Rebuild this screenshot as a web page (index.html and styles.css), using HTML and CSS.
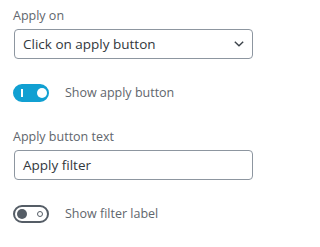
FILE: index.html
```html
<!DOCTYPE html>
<html>
<head>
<meta charset="utf-8">
<link rel="stylesheet" href="styles.css">
</head>
<body>
<div class="panel">
  <div class="field">
    <label class="label">Apply on</label>
    <div class="select">
      <span class="select-text">Click on apply button</span>
      <svg class="chevron" width="12" height="8" viewBox="0 0 12 8"><path d="M1.8 1.8 L6 5.8 L10.2 1.8" fill="none" stroke="#3c434a" stroke-width="1.4"/></svg>
    </div>
  </div>
  <div class="toggle-row">
    <span class="toggle on">
      <span class="on-icon"></span>
      <span class="thumb"></span>
    </span>
    <span class="toggle-label">Show apply button</span>
  </div>
  <div class="field">
    <label class="label">Apply button text</label>
    <div class="input">Apply filter</div>
  </div>
  <div class="toggle-row">
    <span class="toggle off">
      <span class="thumb"></span>
      <span class="off-icon"></span>
    </span>
    <span class="toggle-label">Show filter label</span>
  </div>
</div>
</body>
</html>
```
FILE: styles.css
```css
* { box-sizing: border-box; }
body {
  margin: 0;
  background: #fff;
  font-family: "Open Sans", "Noto Sans", sans-serif;
  color: #50575e;
}
.panel {
  display: flex;
  flex-direction: column;
  padding: 7px 14px 0 14px;
}
.field {
  display: flex;
  flex-direction: column;
}
.label {
  font-size: 12.5px;
  line-height: 18px;
  color: #5f666d;
  margin-left: -1px;
  margin-bottom: 4px;
}
.select, .input {
  width: 239px;
  height: 30px;
  border: 1px solid #8d96a0;
  border-radius: 4px;
  display: flex;
  align-items: center;
  padding: 0 8px;
  font-size: 13.5px;
  color: #32373c;
}
.select { justify-content: space-between; padding-right: 7px; }
.chevron { display: block; }
.toggle-row {
  display: flex;
  align-items: center;
  margin: 25px 0 26px -1px;
  height: 18px;
}
.toggle {
  position: relative;
  width: 36px;
  height: 18px;
  border-radius: 9px;
  border: 2px solid #555d66;
  flex: none;
}
.toggle.on { background: #11a0d2; border-color: #11a0d2; }
.thumb {
  position: absolute;
  top: 2px;
  left: 2px;
  width: 10px;
  height: 10px;
  border-radius: 50%;
  background: #555d66;
}
.toggle.on .thumb { left: 22px; background: #fff; }
.on-icon {
  position: absolute;
  left: 6px;
  top: 3px;
  width: 2px;
  height: 8px;
  background: #fff;
}
.off-icon {
  position: absolute;
  right: 4px;
  top: 4px;
  width: 6px;
  height: 6px;
  border-radius: 50%;
  border: 1.5px solid #555d66;
}
.toggle-label {
  margin-left: 16px;
  font-size: 12.5px;
  line-height: 18px;
  color: #5f666d;
}
```
